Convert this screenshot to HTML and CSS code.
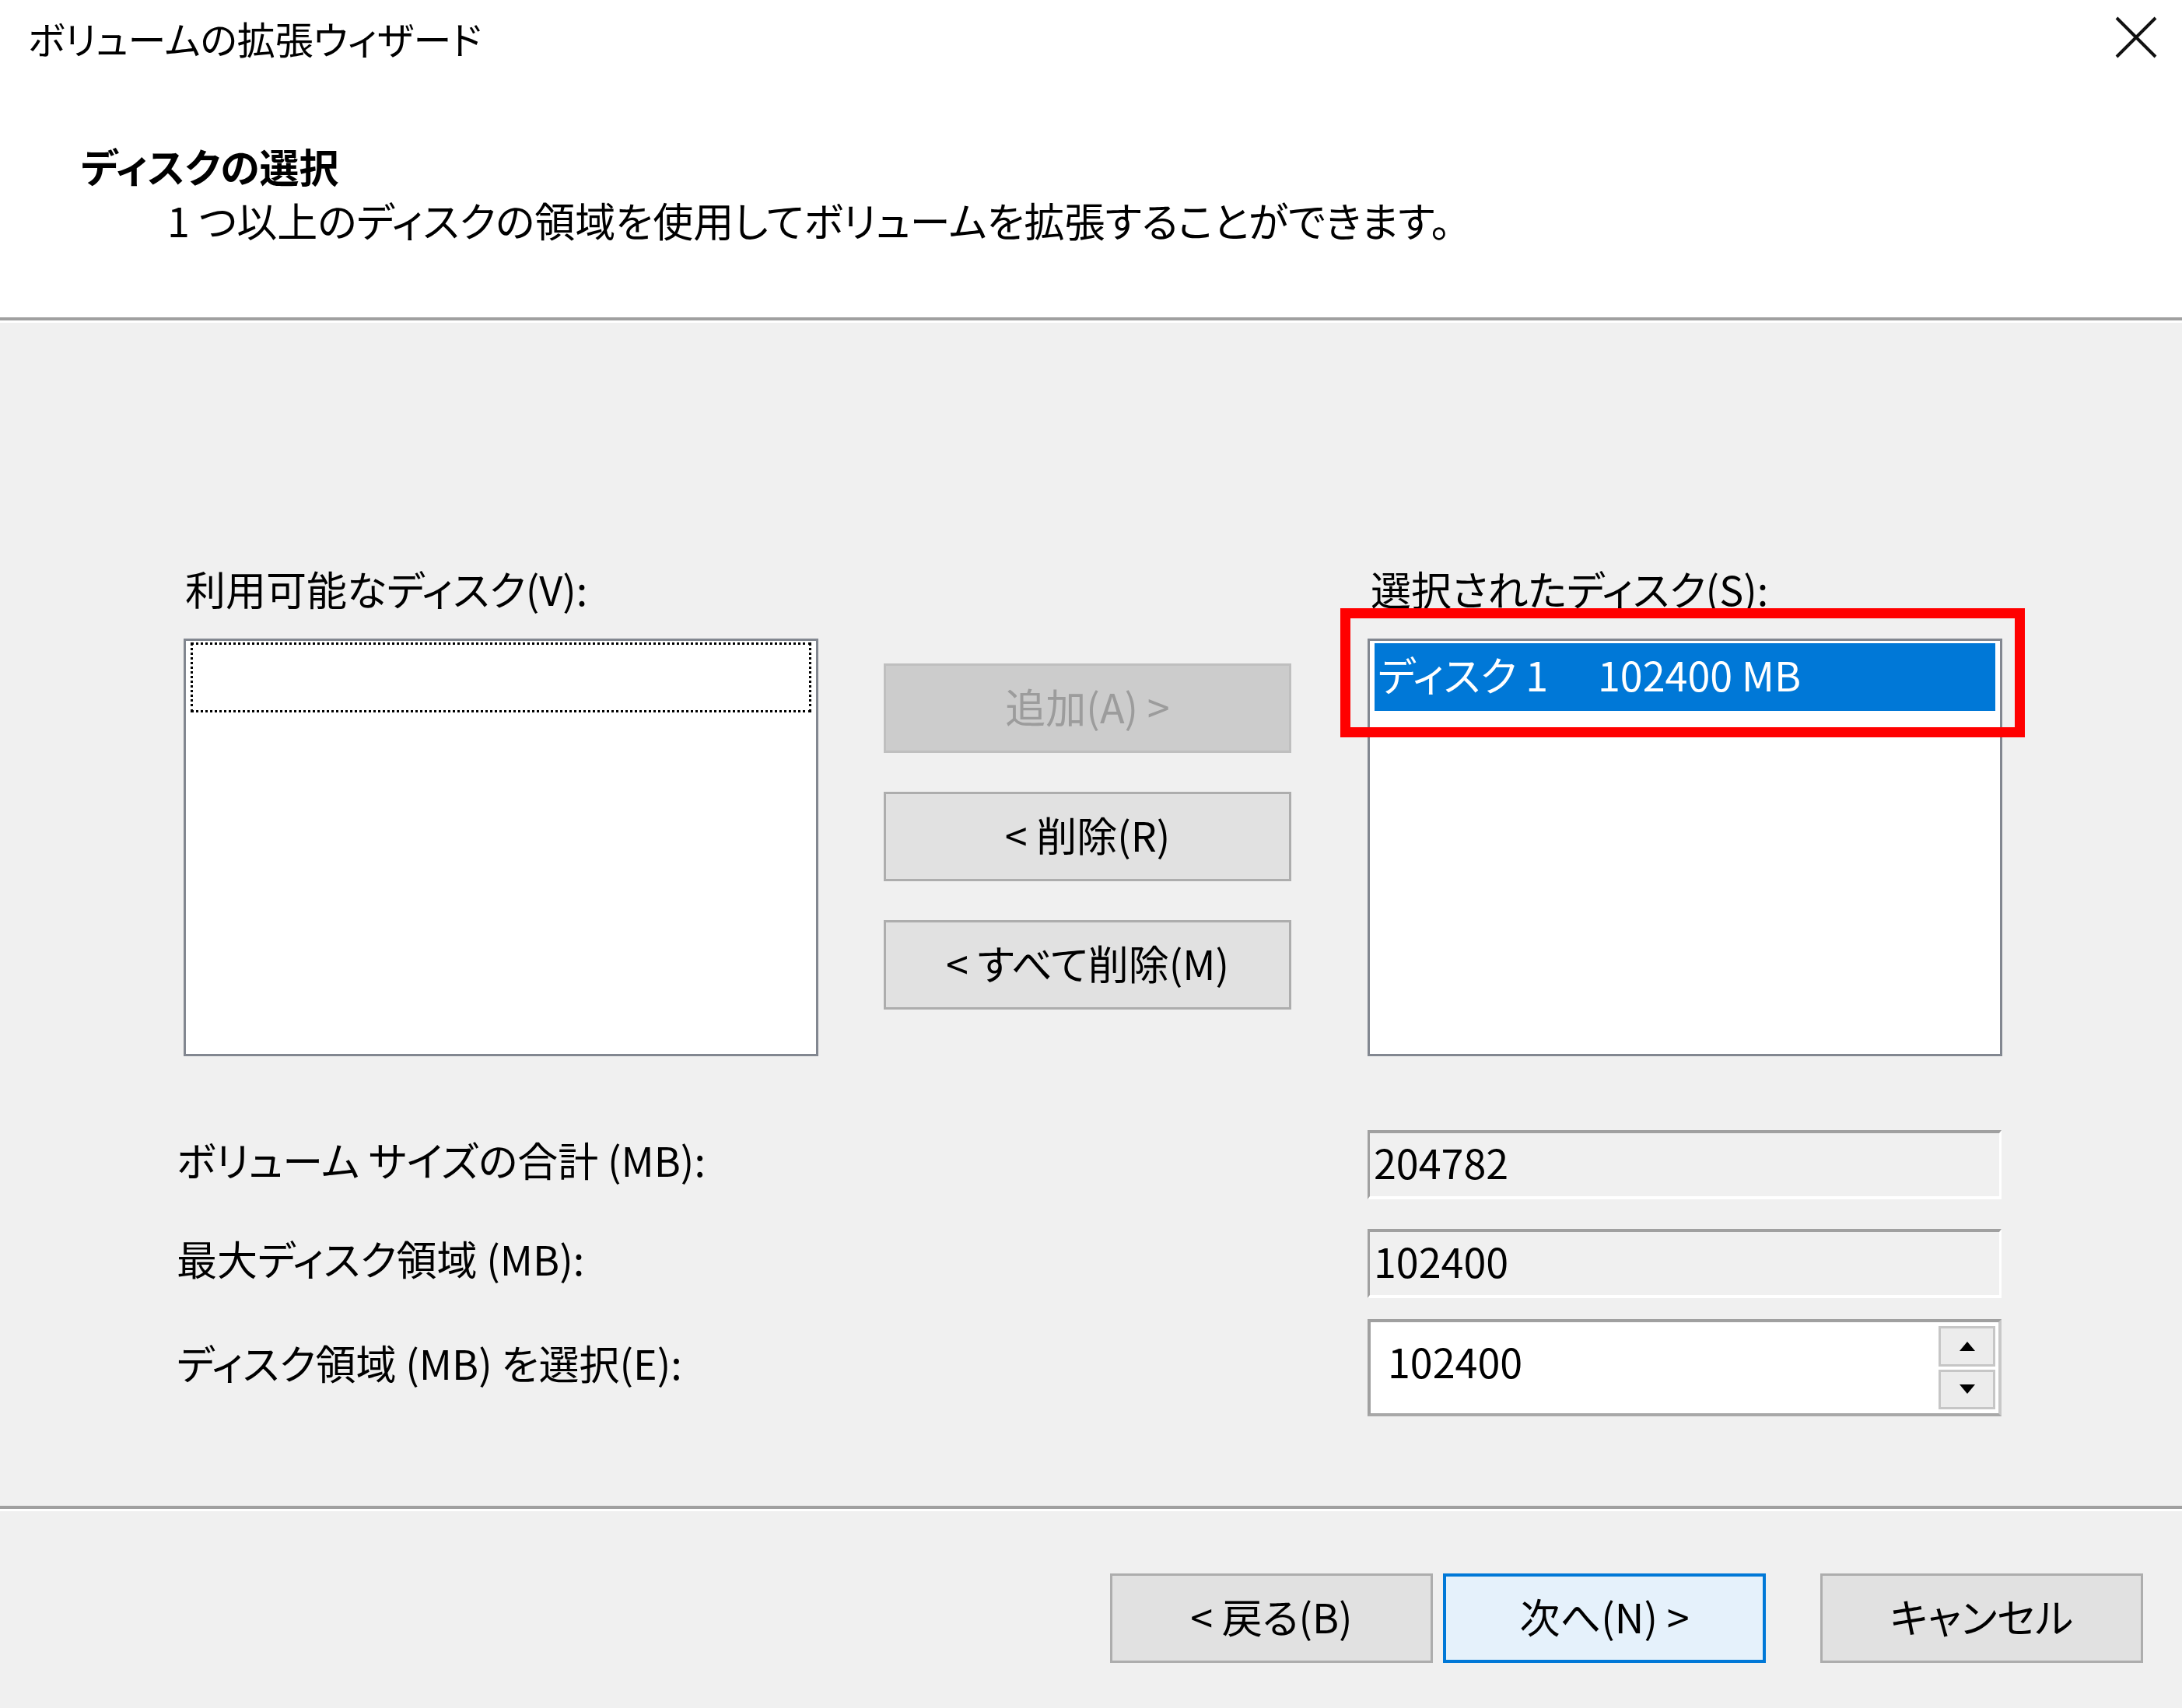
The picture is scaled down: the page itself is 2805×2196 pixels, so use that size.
FILE: index.html
```html
<!DOCTYPE html>
<html lang="ja">
<head>
<meta charset="utf-8">
<title>ボリュームの拡張ウィザード</title>
<link rel="stylesheet" href="styles.css">
</head>
<body>
<div class="dialog">
  <header class="header">
    <div class="titlebar">
      <span class="title">ボリュームの拡張ウィザード</span>
      <span class="close"><svg viewBox="0 0 56 56" width="56" height="56"><path d="M3 3 L53 53 M53 3 L3 53" stroke="#111" stroke-width="4" fill="none"/></svg></span>
    </div>
    <div class="page-head">
      <div class="heading">ディスクの選択</div>
      <div class="subtitle">1 つ以上のディスクの領域を使用してボリュームを拡張することができます。</div>
    </div>
  </header>
  <div class="sep"></div>
  <main class="body">
    <div class="lists">
      <div class="col">
        <div class="label">利用可能なディスク(V):</div>
        <div class="listbox"><div class="focus-item"></div></div>
      </div>
      <div class="mid">
        <div class="btn btn-disabled">追加(A) &gt;</div>
        <div class="btn">&lt; 削除(R)</div>
        <div class="btn">&lt; すべて削除(M)</div>
      </div>
      <div class="col">
        <div class="label label-right">選択されたディスク(S):</div>
        <div class="listbox">
          <div class="item-selected"><span class="item-name">ディスク 1</span><span class="item-size">102400 MB</span></div>
          <div class="highlight"></div>
        </div>
      </div>
    </div>
    <div class="fields">
      <div class="row">
        <div class="row-label">ボリューム サイズの合計 (MB):</div>
        <div class="ro">204782</div>
      </div>
      <div class="row row-2">
        <div class="row-label">最大ディスク領域 (MB):</div>
        <div class="ro">102400</div>
      </div>
      <div class="row row-3">
        <div class="row-label">ディスク領域 (MB) を選択(E):</div>
        <div class="spin">
          <div class="spin-value">102400</div>
          <div class="spin-btns">
            <div class="spin-btn"><svg viewBox="0 0 20 12" width="20" height="12"><path d="M10 0 L20 12 L0 12 Z" fill="#000"/></svg></div>
            <div class="spin-btn"><svg viewBox="0 0 20 12" width="20" height="12"><path d="M0 0 L20 0 L10 12 Z" fill="#000"/></svg></div>
          </div>
        </div>
      </div>
    </div>
  </main>
  <div class="sep"></div>
  <footer class="footer">
    <div class="btn fbtn">&lt; 戻る(B)</div>
    <div class="btn fbtn btn-default">次へ(N) &gt;</div>
    <div class="btn fbtn btn-cancel">キャンセル</div>
  </footer>
</div>
</body>
</html>
```

FILE: styles.css
```css
* { box-sizing: border-box; }
html, body { margin: 0; padding: 0; }
body {
  width: 2805px;
  height: 2196px;
  overflow: hidden;
  background: #f0f0f0;
  color: #000;
  font-family: "Noto Sans CJK JP", "Noto Sans", sans-serif;
  font-feature-settings: "palt";
  font-size: 52px;
}
.header { background: #fff; height: 408px; }
.titlebar {
  height: 100px;
  display: flex;
  align-items: center;
  justify-content: space-between;
  padding: 0 31px 4px 36px;
}
.title { line-height: 1; font-size: 49px; }
.close svg { display: block; }
.page-head { padding-left: 104px; margin-top: 78px; }
.heading { font-weight: 700; height: 70px; line-height: 70px; font-size: 51px; }
.subtitle { padding-left: 111px; height: 70px; line-height: 70px; }
.sep { height: 7px; border-top: 4px solid #a0a0a0; background: #fff; }

.body { height: 1521px; padding-top: 310px; }
.lists { display: flex; padding-left: 236px; }
.col { width: 816px; display: flex; flex-direction: column; }
.label { height: 70px; line-height: 64px; margin-bottom: 26px; padding-left: 2px; }
.label-right { padding-left: 4px; }
.listbox {
  position: relative;
  height: 537px;
  background: #fff;
  border: 3px solid #828790;
  padding: 2px 6px;
}
.focus-item { height: 90px; border: 3px dotted #000; }
.item-selected {
  margin-top: 1px;
  height: 87px;
  background: #0078d7;
  color: #fff;
  display: flex;
  align-items: center;
  padding: 0 0 8px 4px;
}
.item-name { width: 283px; }
.highlight {
  position: absolute;
  left: -38px;
  top: -42px;
  width: 880px;
  height: 166px;
  border: 13px solid #ff0000;
}
.mid {
  width: 524px;
  margin: 0 98px 0 84px;
  padding-top: 128px;
  display: flex;
  flex-direction: column;
  gap: 50px;
}
.btn {
  height: 115px;
  background: #e1e1e1;
  border: 3px solid #adadad;
  display: flex;
  align-items: center;
  justify-content: center;
  padding-bottom: 6px;
}
.btn-disabled { background: #cccccc; border-color: #bfbfbf; color: #9c9c9c; }

.fields { margin-top: 95px; padding-left: 227px; display: flex; flex-direction: column; }
.row { display: flex; align-items: center; }
.row-2 { margin-top: 38px; }
.row-3 { margin-top: 27px; }
.row-label { width: 1531px; padding-bottom: 14px; }
.ro {
  width: 815px;
  height: 89px;
  background: #f0f0f0;
  border-top: 4px solid #a0a0a0;
  border-left: 3px solid #a0a0a0;
  border-right: 3px solid #fff;
  border-bottom: 4px solid #fff;
  display: flex;
  align-items: center;
  padding: 0 0 8px 5px;
}
.spin {
  width: 815px;
  height: 125px;
  background: #fff;
  border: 4px solid #a0a0a0;
  border-right-color: #c8c8c8;
  border-bottom-color: #a8a8a8;
  display: flex;
}
.spin-value { flex: 1; display: flex; align-items: center; padding: 0 0 18px 22px; }
.spin-btns {
  width: 73px;
  margin: 5px 4px 5px 0;
  display: flex;
  flex-direction: column;
  gap: 4px;
}
.spin-btn {
  flex: 1;
  background: #ececec;
  border: 3px solid #c6c6c6;
  display: flex;
  align-items: center;
  justify-content: center;
}
.spin-btn svg { display: block; }

.footer {
  display: flex;
  justify-content: flex-end;
  padding: 80px 50px 0 0;
}
.fbtn { width: 415px; }
.btn-default {
  margin-left: 13px;
  background: #e5f1fb;
  border: 4px solid #0078d7;
}
.btn-cancel { margin-left: 70px; }
```
